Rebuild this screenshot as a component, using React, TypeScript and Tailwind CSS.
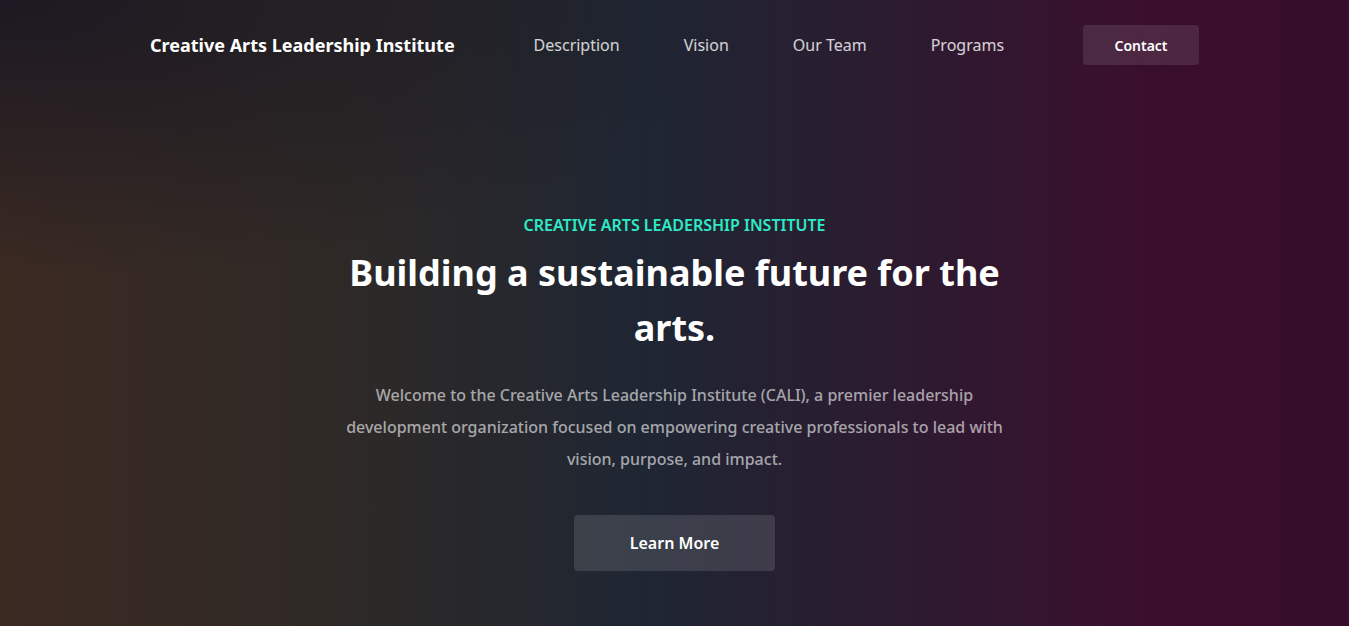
import React from "react";

export default function App() {
  return (
    <div
      className="relative min-h-[626px] w-full overflow-hidden text-white bg-[radial-gradient(ellipse_55%_45%_at_0%_0%,rgba(26,24,34,0.95)_0%,rgba(26,24,34,0)_100%),linear-gradient(to_right,#3c2a22_0%,#2e2926_25%,#1f2633_48%,#2b1c30_65%,#3a0f2d_85%,#360d2a_100%)]"
      style={{ fontFamily: '"Noto Sans", "Open Sans", sans-serif' }}
    >
      <nav className="mx-auto flex w-[1049px] items-center justify-between pt-[25px]">
        <div className="text-[18px] font-bold leading-[40px] text-white">
          Creative Arts Leadership Institute
        </div>
        <div className="flex items-center gap-16 text-[16px] text-white/80">
          <a>Description</a>
          <a>Vision</a>
          <a>Our Team</a>
          <a>Programs</a>
        </div>
        <button className="h-10 w-[116px] rounded bg-white/10 text-[14px] font-semibold text-white">
          Contact
        </button>
      </nav>

      <section className="mx-auto flex max-w-2xl flex-col items-center pt-[148px] text-center">
        <div className="text-[16px] font-semibold uppercase leading-[24px] text-[#2eeac6]">
          Creative Arts Leadership Institute
        </div>
        <h1 className="mt-[8px] text-[36px] font-bold leading-[55px] text-white">
          Building a sustainable future for the arts.
        </h1>
        <p className="mt-6 text-[16px] font-medium leading-[32px] text-white/60">
          Welcome to the Creative Arts Leadership Institute (CALI), a premier leadership development
          organization focused on empowering creative professionals to lead with vision, purpose,
          and impact.
        </p>
        <button className="mt-10 h-14 w-[201px] rounded bg-white/[0.12] text-[16px] font-semibold text-white">
          Learn More
        </button>
      </section>
    </div>
  );
}
